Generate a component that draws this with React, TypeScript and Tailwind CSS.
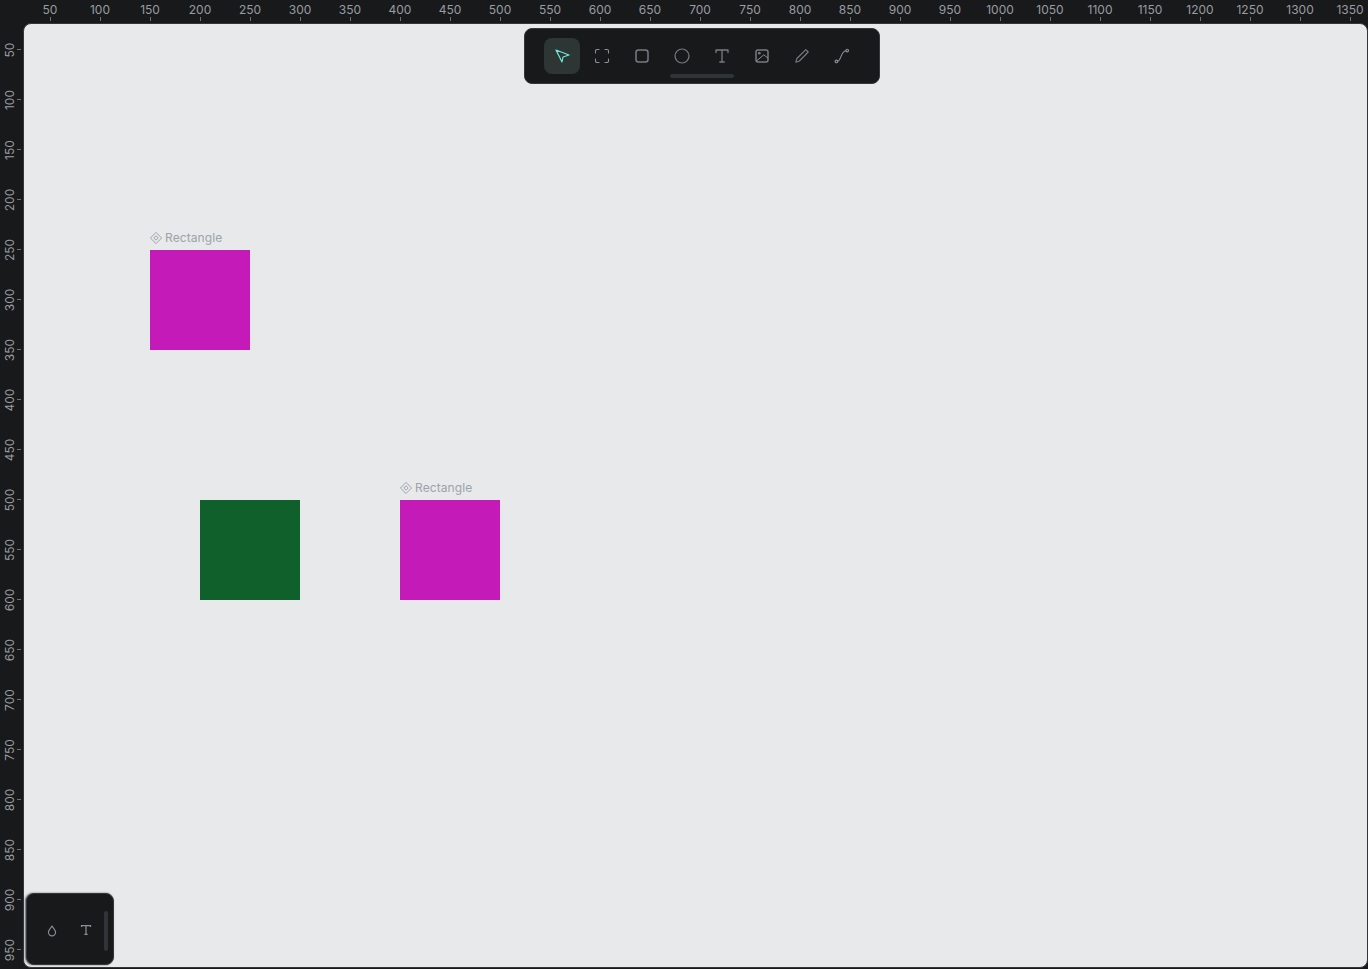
import React from "react";

const F = { fontFamily: '"Inter", "Liberation Sans", sans-serif' };
const hTicks = Array.from({ length: 27 }, (_, i) => (i + 1) * 50);
const vTicks = Array.from({ length: 19 }, (_, i) => (i + 1) * 50);

function Tag({ className }: { className: string }) {
  return (
    <div className={`absolute flex items-center gap-[3px] text-[12px] leading-[14px] tracking-[0.1px] text-[#9ca3a9] ${className}`}>
      <svg width="12" height="12" viewBox="0 0 12 12" fill="none" stroke="#9ca3a9" strokeWidth="1">
        <path d="M6 .4 11.6 6 6 11.6.4 6Z" />
        <path d="M6 3.8 8.2 6 6 8.2 3.8 6Z" />
      </svg>
      <span>Rectangle</span>
    </div>
  );
}

function Tool({ active, children }: { active?: boolean; children: React.ReactNode }) {
  return (
    <div className={`flex h-9 w-9 items-center justify-center rounded-lg ${active ? "bg-[#2d3535]" : ""}`}>
      <svg width="18" height="18" viewBox="0 0 18 18" fill="none" stroke={active ? "#6fe8da" : "#777c80"} strokeWidth="1.2" strokeLinecap="round" strokeLinejoin="round">
        {children}
      </svg>
    </div>
  );
}

export default function App() {
  return (
    <div className="relative h-[969px] w-[1368px] overflow-hidden bg-[#18191b]" style={F}>
      {/* rulers */}
      {hTicks.map((t) => (
        <div key={t} className="absolute top-0 flex h-[23px] w-12 -translate-x-1/2 flex-col items-center" style={{ left: t + 0.5 }}>
          <span className="mt-[3px] -translate-x-[0.5px] text-[12px] leading-[14px] text-[#999da1]">{t}</span>
          <span className="h-1 w-px bg-[#6f7377]" />
        </div>
      ))}
      {vTicks.map((t) => (
        <div key={t} className="absolute left-0 flex h-[23px] w-12 origin-center -translate-x-[12.5px] -translate-y-1/2 -rotate-90 flex-col items-center" style={{ top: t - 0.5 }}>
          <span className="mt-[3px] text-[12px] leading-[14px] text-[#999da1]">{t}</span>
          <span className="h-1 w-px bg-[#6f7377]" />
        </div>
      ))}

      {/* canvas */}
      <div className="absolute left-[23px] top-[23px] h-[945px] w-[1345px] overflow-hidden rounded-lg border border-[#33373a] bg-[#e8e9eb]">
        <div className="absolute left-[126px] top-[226px] h-[100px] w-[100px] bg-[#c41ab8]" />
        <div className="absolute left-[176px] top-[476px] h-[100px] w-[100px] bg-[#10602c]" />
        <div className="absolute left-[376px] top-[476px] h-[100px] w-[100px] bg-[#c41ab8]" />
        <Tag className="left-[126px] top-[207px]" />
        <Tag className="left-[376px] top-[457px]" />
      </div>

      {/* top toolbar */}
      <div className="absolute left-[524px] top-[28px] flex h-14 w-[356px] items-center gap-1 rounded-lg border border-[#33373a] bg-[#18191b] pl-[19px]">
        <Tool active>
          <path d="M3 3 16 8 10 10 9 15Z" />
        </Tool>
        <Tool>
          <path stroke="#8c9195" strokeWidth="1.1" d="M2.5 6V4a1.5 1.5 0 0 1 1.5-1.5h2M12 2.5h2A1.5 1.5 0 0 1 15.5 4v2M15.5 12v2a1.5 1.5 0 0 1-1.5 1.5h-2M6 15.5H4A1.5 1.5 0 0 1 2.5 14v-2" />
        </Tool>
        <Tool>
          <rect x="3" y="3" width="12" height="12" rx="2.5" strokeWidth="1.5" />
        </Tool>
        <Tool>
          <circle cx="9" cy="9" r="7" />
        </Tool>
        <Tool>
          <path strokeWidth="1.3" d="M3 5.5V3h12v2.5M9 3v12M6.8 15h4.4" />
        </Tool>
        <Tool>
          <rect x="3" y="3" width="12" height="12" rx="2" strokeWidth="1.5" />
          <circle cx="6.2" cy="6.2" r="0.9" stroke="#8c9195" strokeWidth="1" />
          <path stroke="#8c9195" strokeWidth="1" d="M3.5 14 10.8 7.8 14.8 11" />
        </Tool>
        <Tool>
          <path strokeWidth="1.1" d="M12.8 2.6 15.2 5 6.4 14 2.8 15.2 3.9 11.5Z" />
        </Tool>
        <Tool>
          <circle cx="3.4" cy="14.4" r="1.3" strokeWidth="1.1" stroke="#8c9195" />
          <circle cx="14.2" cy="3.6" r="1.3" strokeWidth="1.1" stroke="#8c9195" />
          <path strokeWidth="1.1" stroke="#8c9195" d="M4.7 14.2C8.5 13.5 7.5 4.5 12.9 3.8" />
        </Tool>
        <div className="absolute bottom-[5px] left-[145px] h-1 w-16 rounded-full bg-[#2f3437]" />
      </div>

      {/* bottom left panel */}
      <div className="absolute left-[26px] top-[893px] flex h-[72px] w-[88px] items-center rounded-lg border border-[#33373a] bg-[#18191b] pl-[19px] shadow-[-1px_0_2px_rgba(0,0,0,0.6)]">
        <svg width="12" height="12" viewBox="0 0 12 12" fill="none" stroke="#8c9195" strokeWidth="1.1" className="mt-[3px]">
          <path d="M6 1.2C4.6 3 2.4 5 2.4 7.3a3.6 3.6 0 0 0 7.2 0C9.6 5 7.4 3 6 1.2Z" />
        </svg>
        <svg width="12" height="12" viewBox="0 0 12 12" fill="none" stroke="#8c9195" strokeWidth="1.2" className="ml-[22px] mt-px">
          <path d="M1.5 3V1.6h9V3M6 1.6v8.8M4.4 10.4h3.2" />
        </svg>
        <div className="absolute left-[77px] top-[17px] h-10 w-1 rounded-full bg-[#2f3437]" />
      </div>
    </div>
  );
}
